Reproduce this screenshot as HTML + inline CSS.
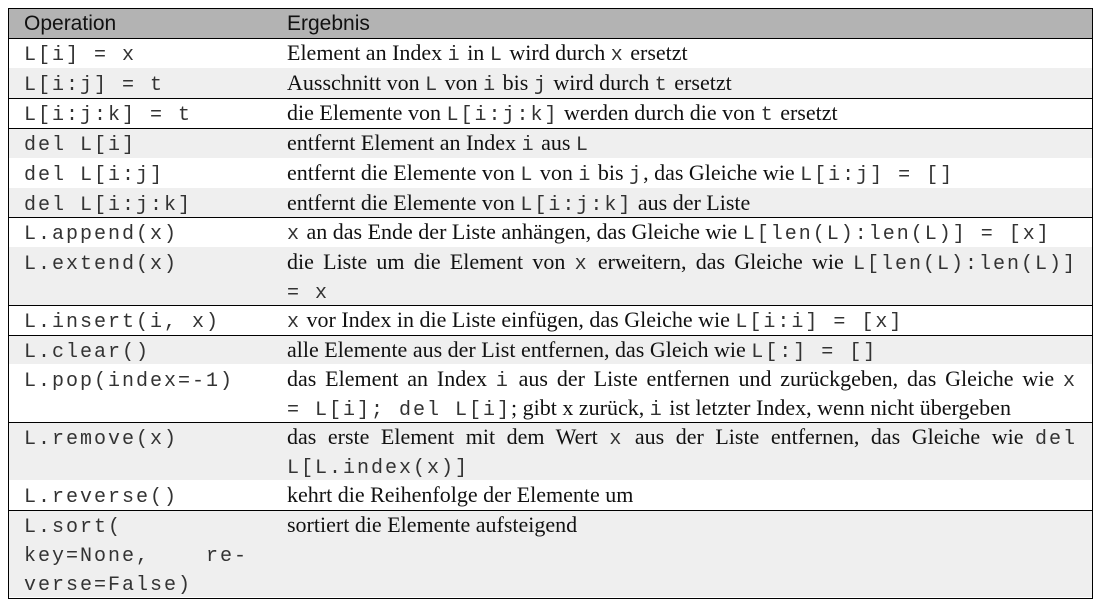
<!DOCTYPE html>
<html><head><meta charset="utf-8"><style>
body{margin:0;background:#fff;width:1100px;height:609px;position:relative;overflow:hidden;font-family:"Liberation Serif",serif;font-size:22px;color:#111}
.t{position:absolute;left:8px;top:8px;width:1085px;height:591px;border:1.5px solid #000;box-sizing:border-box;overflow:hidden}
.r{position:absolute;left:0;width:100%}
.g{background:#efefef}
.w{background:#fff}
.h{background:#b3b3b3}
.b{border-top:1.5px solid #000}
.l{position:absolute;white-space:nowrap;line-height:29.3px;height:29.3px}
.a{left:15px}
.c{left:278px}
.j{width:790px;text-align:justify;text-align-last:justify}
code{font-family:"Liberation Mono",monospace;font-size:20px;letter-spacing:2px;color:#333}
.hs{font-family:"Liberation Sans",sans-serif;font-size:21px}
</style></head><body>
<div class="t">
<div class="r h" style="top:0;height:29px"></div>
<div class="r w b" style="top:29px;height:30px"></div>
<div class="r g" style="top:59px;height:30px"></div>
<div class="r w b" style="top:89px;height:30px"></div>
<div class="r g b" style="top:119px;height:30px"></div>
<div class="r w" style="top:149px;height:30px"></div>
<div class="r g" style="top:179px;height:29px"></div>
<div class="r w b" style="top:208px;height:30px"></div>
<div class="r g" style="top:238px;height:58px"></div>
<div class="r w b" style="top:296px;height:30px"></div>
<div class="r g b" style="top:326px;height:29px"></div>
<div class="r w" style="top:355px;height:58px"></div>
<div class="r g b" style="top:413px;height:58px"></div>
<div class="r w" style="top:471px;height:30px"></div>
<div class="r g b" style="top:501px;height:86px"></div>

<div class="l a hs" style="top:0">Operation</div><div class="l c hs" style="top:0">Ergebnis</div>
<div class="l a" style="top:29px"><code>L[i] = x</code></div><div class="l c" style="top:29px">Element an Index <code>i</code> in <code>L</code> wird durch <code>x</code> ersetzt</div>
<div class="l a" style="top:59px"><code>L[i:j] = t</code></div><div class="l c" style="top:59px">Ausschnitt von <code>L</code> von <code>i</code> bis <code>j</code> wird durch <code>t</code> ersetzt</div>
<div class="l a" style="top:89px"><code>L[i:j:k] = t</code></div><div class="l c" style="top:89px">die Elemente von <code>L[i:j:k]</code> werden durch die von <code>t</code> ersetzt</div>
<div class="l a" style="top:119px"><code>del L[i]</code></div><div class="l c" style="top:119px">entfernt Element an Index <code>i</code> aus <code>L</code></div>
<div class="l a" style="top:149px"><code>del L[i:j]</code></div><div class="l c" style="top:149px">entfernt die Elemente von <code>L</code> von <code>i</code> bis <code>j</code>, das Gleiche wie <code>L[i:j] = []</code></div>
<div class="l a" style="top:179px"><code>del L[i:j:k]</code></div><div class="l c" style="top:179px">entfernt die Elemente von <code>L[i:j:k]</code> aus der Liste</div>
<div class="l a" style="top:208px"><code>L.append(x)</code></div><div class="l c" style="top:208px"><code>x</code> an das Ende der Liste anhängen, das Gleiche wie <code>L[len(L):len(L)] = [x]</code></div>
<div class="l a" style="top:238px"><code>L.extend(x)</code></div><div class="l c j" style="top:238px">die Liste um die Element von <code>x</code> erweitern, das Gleiche wie <code>L[len(L):len(L)]</code></div>
<div class="l c" style="top:267px"><code>= x</code></div>
<div class="l a" style="top:296px"><code>L.insert(i, x)</code></div><div class="l c" style="top:296px"><code>x</code> vor Index in die Liste einfügen, das Gleiche wie <code>L[i:i] = [x]</code></div>
<div class="l a" style="top:326px"><code>L.clear()</code></div><div class="l c" style="top:326px">alle Elemente aus der List entfernen, das Gleich wie <code>L[:] = []</code></div>
<div class="l a" style="top:355px"><code>L.pop(index=-1)</code></div><div class="l c j" style="top:355px">das Element an Index <code>i</code> aus der Liste entfernen und zurückgeben, das Gleiche wie <code>x</code></div>
<div class="l c" style="top:384px"><code>= L[i]; del L[i]</code>; gibt x zurück, <code>i</code> ist letzter Index, wenn nicht übergeben</div>
<div class="l a" style="top:413px"><code>L.remove(x)</code></div><div class="l c j" style="top:413px">das erste Element mit dem Wert <code>x</code> aus der Liste entfernen, das Gleiche wie <code>del</code></div>
<div class="l c" style="top:442px"><code>L[L.index(x)]</code></div>
<div class="l a" style="top:471px"><code>L.reverse()</code></div><div class="l c" style="top:471px">kehrt die Reihenfolge der Elemente um</div>
<div class="l a" style="top:501px"><code>L.sort(</code></div><div class="l c" style="top:501px">sortiert die Elemente aufsteigend</div>
<div class="l a" style="top:530px"><code>key=None,&nbsp;&nbsp;&nbsp;&nbsp;re-</code></div>
<div class="l a" style="top:559px"><code>verse=False)</code></div>
</div>
</body></html>
